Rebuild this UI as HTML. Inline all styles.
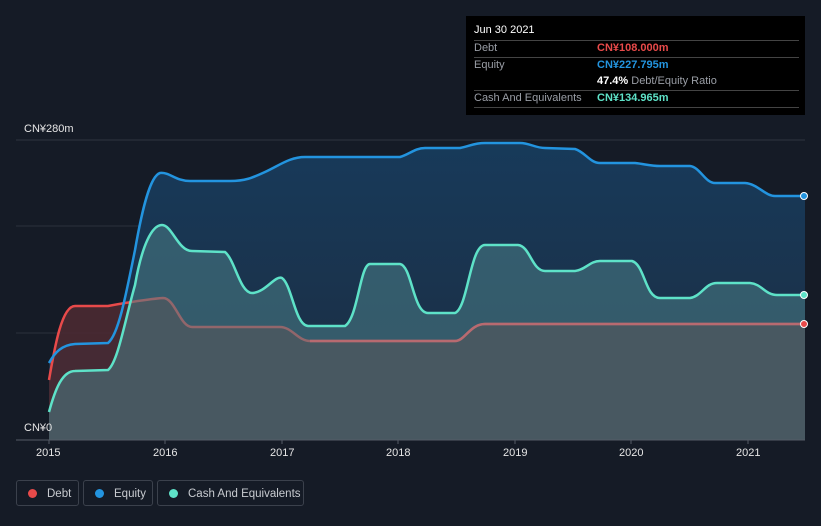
<!DOCTYPE html>
<html><head><meta charset="utf-8"><style>
html,body{margin:0;width:821px;height:526px;overflow:hidden}
body{background:#151b26;font-family:"Liberation Sans",sans-serif;position:relative}
.tt{position:absolute;left:466px;top:16px;width:339px;height:99px;background:#000;color:#fff;font-size:11px}
.row{position:absolute;left:8px;width:325px;border-top:1px solid #444}
.lab{position:absolute;left:8px;color:#9a9ea6}
.val{position:absolute;left:131px;font-weight:bold}
.ax{position:absolute;color:#e6e6e6;font-size:11px}
.leg{position:absolute;top:480px;height:26px;border:1px solid #3b414c;border-radius:3px;color:#c8cbd0;font-size:11.5px;line-height:26px;box-sizing:border-box;white-space:nowrap;overflow:hidden}
.leg i{display:inline-block;width:9px;height:9px;border-radius:50%;margin:0 10px 0 11px;vertical-align:-1px}
</style></head><body>
<svg width="821" height="526" style="position:absolute;left:0;top:0">
<defs>
<linearGradient id="ge" x1="0" y1="0" x2="0" y2="1"><stop offset="0" stop-color="#173a5a"/><stop offset="1" stop-color="#1d2c40"/></linearGradient>
</defs>
<line x1="16" y1="140" x2="805" y2="140" stroke="#2f3540"/>
<line x1="16" y1="226" x2="805" y2="226" stroke="#2b313c"/>
<line x1="16" y1="333" x2="805" y2="333" stroke="#2b313c"/>
<path d="M49,363 C55,352 62,345 75,344 L108,343 C118,335 125,300 135,250 C142,210 150,176 160,173 C170,172 175,181 190,181 L230,181 C245,181 252,178 265,172 C280,165 290,157 305,157 L400,157 C410,154 415,148 425,148 L460,148 C470,146 474,143 485,143 L520,143 C530,143 535,148 545,148 L575,149 C585,152 590,163 600,163 L635,163 C645,164 650,166 660,166 L690,166 C700,167 705,183 715,183 L745,183 C758,184 765,196 775,196 L805,196 L805,440 L49,440Z" fill="url(#ge)"/>
<path d="M49,380 C55,345 62,306 75,306 L108,306 C130,302 150,299 163,298 C175,298 180,327 192,327 L280,327 C292,327 298,341 310,341 L455,341 C465,341 470,324 485,324 L805,324 L805,440 L49,440Z" fill="#4a2a32" fill-opacity="0.9"/>
<path d="M49,380 C55,345 62,306 75,306 L108,306 C130,302 150,299 163,298 C175,298 180,327 192,327 L280,327 C292,327 298,341 310,341 L455,341 C465,341 470,324 485,324 L805,324" fill="none" stroke="#e84a4a" stroke-width="2.5"/>
<path d="M49,363 C55,352 62,345 75,344 L108,343 C118,335 125,300 135,250 C142,210 150,176 160,173 C170,172 175,181 190,181 L230,181 C245,181 252,178 265,172 C280,165 290,157 305,157 L400,157 C410,154 415,148 425,148 L460,148 C470,146 474,143 485,143 L520,143 C530,143 535,148 545,148 L575,149 C585,152 590,163 600,163 L635,163 C645,164 650,166 660,166 L690,166 C700,167 705,183 715,183 L745,183 C758,184 765,196 775,196 L805,196" fill="none" stroke="#2394df" stroke-width="2.5"/>
<path d="M49,412 C55,390 62,371 75,371 L108,370 C118,362 125,320 135,285 C142,245 152,225 162,225 C172,225 178,251 192,251 L225,252 C235,260 240,293 252,293 C265,293 275,275 282,278 C292,285 295,325 308,326 L345,326 C358,318 360,264 370,264 L400,264 C412,266 413,313 428,313 L455,313 C468,308 470,245 485,245 L518,245 C530,246 532,271 545,271 L575,271 C585,270 590,261 600,261 L632,261 C645,265 645,298 660,298 L690,298 C702,296 705,283 717,283 L750,283 C762,284 765,295 777,295 L805,295 L805,440 L49,440Z" fill="#4a7d86" fill-opacity="0.55"/>
<path d="M310,341 L455,341 C465,341 470,324 485,324 L805,324" fill="none" stroke="#b86a70" stroke-width="2.5"/>
<path d="M49,412 C55,390 62,371 75,371 L108,370 C118,362 125,320 135,285 C142,245 152,225 162,225 C172,225 178,251 192,251 L225,252 C235,260 240,293 252,293 C265,293 275,275 282,278 C292,285 295,325 308,326 L345,326 C358,318 360,264 370,264 L400,264 C412,266 413,313 428,313 L455,313 C468,308 470,245 485,245 L518,245 C530,246 532,271 545,271 L575,271 C585,270 590,261 600,261 L632,261 C645,265 645,298 660,298 L690,298 C702,296 705,283 717,283 L750,283 C762,284 765,295 777,295 L805,295" fill="none" stroke="#5ee2c8" stroke-width="2.5"/>
<line x1="16" y1="440" x2="805" y2="440" stroke="#555b66"/>
<g stroke="#555b66"><line x1="49" y1="440" x2="49" y2="444"/><line x1="165" y1="440" x2="165" y2="444"/><line x1="282" y1="440" x2="282" y2="444"/><line x1="398" y1="440" x2="398" y2="444"/><line x1="515" y1="440" x2="515" y2="444"/><line x1="631" y1="440" x2="631" y2="444"/><line x1="748" y1="440" x2="748" y2="444"/></g>
<circle cx="804" cy="196" r="3.5" fill="#2394df" stroke="#fff" stroke-width="1"/>
<circle cx="804" cy="295" r="3.5" fill="#5ee2c8" stroke="#fff" stroke-width="1"/>
<circle cx="804" cy="324" r="3.5" fill="#e84a4a" stroke="#fff" stroke-width="1"/>
</svg>
<div class="ax" style="left:24px;top:123px">CN¥280m</div>
<div class="ax" style="left:24px;top:422px">CN¥0</div>
<div class="ax" style="left:36px;top:447px">2015</div>
<div class="ax" style="left:153px;top:447px">2016</div>
<div class="ax" style="left:270px;top:447px">2017</div>
<div class="ax" style="left:386px;top:447px">2018</div>
<div class="ax" style="left:503px;top:447px">2019</div>
<div class="ax" style="left:619px;top:447px">2020</div>
<div class="ax" style="left:736px;top:447px">2021</div>
<div class="tt">
<div style="position:absolute;left:8px;top:8px">Jun 30 2021</div>
<div class="row" style="top:24px"></div>
<div class="lab" style="top:26px">Debt</div><div class="val" style="top:26px;color:#e84a4a">CN¥108.000m</div>
<div class="row" style="top:41px"></div>
<div class="lab" style="top:43px">Equity</div><div class="val" style="top:43px;color:#2394df">CN¥227.795m</div>
<div class="val" style="top:59px;color:#fff">47.4% <span style="font-weight:normal;color:#9a9ea6">Debt/Equity Ratio</span></div>
<div class="row" style="top:74px"></div>
<div class="lab" style="top:76px">Cash And Equivalents</div><div class="val" style="top:76px;color:#5ee2c8">CN¥134.965m</div>
<div class="row" style="top:91px"></div>
</div>
<div class="leg" style="left:16px;width:63px"><i style="background:#e84a4a"></i>Debt</div>
<div class="leg" style="left:83px;width:70px"><i style="background:#2394df"></i>Equity</div>
<div class="leg" style="left:157px;width:147px"><i style="background:#5ee2c8"></i>Cash And Equivalents</div>
</body></html>
